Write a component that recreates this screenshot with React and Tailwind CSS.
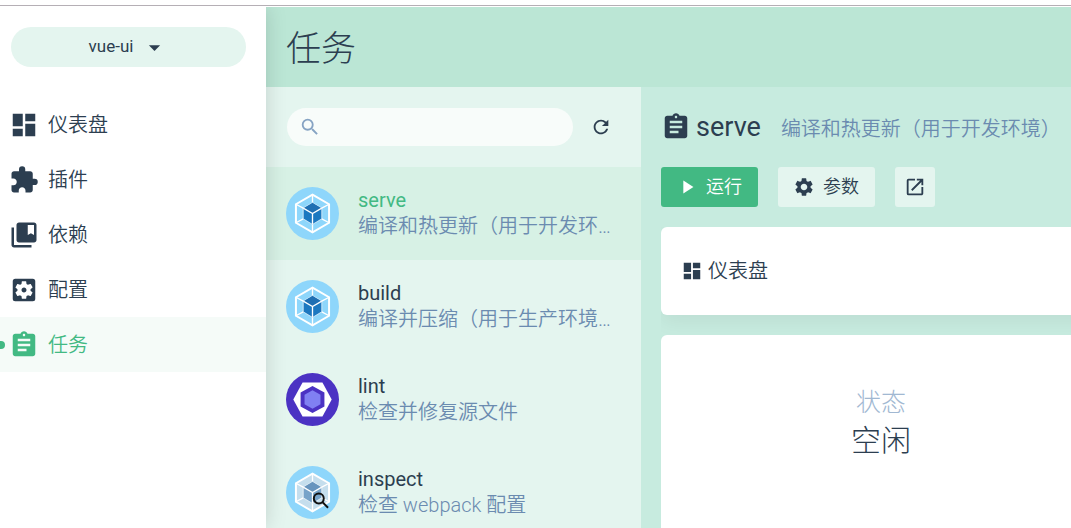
import { useState } from 'react'
import {
  MdArrowDropDown,
  MdAssignment,
  MdCollectionsBookmark,
  MdDashboard,
  MdExtension,
  MdOpenInNew,
  MdPlayArrow,
  MdRefresh,
  MdSearch,
  MdSettings,
  MdSettingsApplications,
} from 'react-icons/md'

const NAV = [
  { id: 'dashboard', label: '仪表盘', icon: MdDashboard },
  { id: 'plugins', label: '插件', icon: MdExtension },
  { id: 'dependencies', label: '依赖', icon: MdCollectionsBookmark },
  { id: 'configuration', label: '配置', icon: MdSettingsApplications },
  { id: 'tasks', label: '任务', icon: MdAssignment },
]

const WebpackIcon = ({ inspect = false }) => {
  const shell = inspect ? '#c5deed' : '#8ed6fb'
  const cube = inspect ? '#77a3c9' : '#1c78c0'
  const top = inspect ? '#6794bd' : '#1f6fb3'

  return (
    <svg viewBox="-80 -80 160 160" className="size-[53px] shrink-0" aria-hidden="true">
      <circle r="80" fill="#8ed6fb" />
      <path d="M0-57 50-28V28L0 57-50 28V-28Z" fill={shell} stroke="#fff" strokeWidth="6" />
      <path d="M0-57V-33M50-28 28-16M50 28 28 16M0 57V33M-50 28-28 16M-50-28-28-16" stroke="#fff" strokeWidth="4" />
      <path d="M0-33 28-16V16L0 33-28 16V-16Z" fill={cube} stroke="#fff" strokeWidth="2" />
      <path d="M0-32 27-16 0-1-27-16Z" fill={top} />
      <path d="M-28-16 0 0 28-16M0 0V33" fill="none" stroke="#fff" strokeWidth="4" />
      {inspect && (
        <g fill="none" stroke="#111" strokeWidth="6">
          <circle cx="19" cy="18" r="15" />
          <path d="M30 29 47 46" />
        </g>
      )}
    </svg>
  )
}

const EslintIcon = () => (
  <svg viewBox="-80 -80 160 160" className="size-[53px] shrink-0" aria-hidden="true">
    <circle r="80" fill="#4b32c3" />
    <path d="M-58 0-30-51H30L58 0 30 51H-30Z" fill="#fff" />
    <path d="M0-41 36-21V21L0 41-36 21V-21Z" fill="#4b32c3" />
    <path d="M0-28 24-14V14L0 28-24 14V-14Z" fill="#8080f2" />
  </svg>
)

const TASKS = [
  { name: 'serve', description: '编译和热更新（用于开发环境）', icon: <WebpackIcon /> },
  { name: 'build', description: '编译并压缩（用于生产环境）', icon: <WebpackIcon /> },
  { name: 'lint', description: '检查并修复源文件', icon: <EslintIcon /> },
  { name: 'inspect', description: '检查 webpack 配置', icon: <WebpackIcon inspect /> },
]

const Sidebar = () => (
  <aside className="relative z-10 w-[266px] shrink-0 bg-white pt-5 shadow-[0_0_20px_rgba(0,0,0,0.15)]">
    <button
      type="button"
      className="ml-[11px] flex h-10 w-[235px] items-center justify-center gap-2 rounded-full bg-[#e4f5ef] text-[17px]"
    >
      vue-ui
      <MdArrowDropDown className="size-[27px]" />
    </button>

    <nav className="mt-[30px]">
      {NAV.map(({ id, label, icon: Icon }) => (
        <a
          key={id}
          href={`#${id}`}
          className={`relative flex h-[55px] items-center gap-[9px] pl-[9px] text-xl font-[350] ${
            id === 'tasks' ? 'bg-[#f5fbf8] text-[#42b983]' : ''
          }`}
        >
          {id === 'tasks' && (
            <span className="absolute -left-[3px] size-2 rounded-full bg-[#42b983]" />
          )}
          <Icon className="size-[30px]" />
          {label}
        </a>
      ))}
    </nav>
  </aside>
)

const TaskList = ({ selected, onSelect }) => {
  const [search, setSearch] = useState('')
  const tasks = TASKS.filter(t => t.name.includes(search))

  return (
    <section className="w-[375px] shrink-0 overflow-hidden bg-[#e4f5ef]">
      <div className="flex h-20 items-center gap-[17px] pl-[21px]">
        <label className="flex h-[38px] w-[286px] items-center gap-2 rounded-full bg-[#f8fcfa] px-3">
          <MdSearch className="size-[22px] shrink-0 text-[#86a3c3]" />
          <input
            type="text"
            aria-label="搜索任务"
            value={search}
            onChange={e => setSearch(e.target.value)}
            className="w-full min-w-0 bg-transparent text-lg focus:outline-none"
          />
        </label>
        <button type="button" aria-label="刷新">
          <MdRefresh className="size-[22px]" />
        </button>
      </div>

      {tasks.map(task => (
        <button
          key={task.name}
          type="button"
          onClick={() => onSelect(task.name)}
          className={`flex w-full gap-[19px] p-5 pr-7 text-left text-xl leading-[26px] ${
            task.name === selected ? 'bg-[#d7f1e5]' : ''
          }`}
        >
          {task.icon}
          <span className="min-w-0">
            <span className={`block ${task.name === selected ? 'text-[#42b983]' : ''}`}>
              {task.name}
            </span>
            <span className="block truncate font-[350] text-[#6b8bb0]">{task.description}</span>
          </span>
        </button>
      ))}
    </section>
  )
}

const TaskDetails = ({ task }) => (
  <section className="min-w-0 flex-1 overflow-hidden bg-[#c7ebdf] pl-5">
    <div className="flex h-20 items-center whitespace-nowrap">
      <MdAssignment className="mr-[5px] size-[30px] shrink-0" />
      <h2 className="mr-5 text-[27px]">{task.name}</h2>
      <p className="pt-1 text-xl font-[350] text-[#6b8bb0]">{task.description}</p>
    </div>

    {/* Actions */}
    <div className="flex gap-5 text-lg font-[350]">
      <button type="button" className="flex h-10 items-center gap-2 rounded-[3px] bg-[#42b983] pl-[15px] pr-4 text-white">
        <MdPlayArrow className="size-[22px]" />
        运行
      </button>
      <button type="button" className="flex h-10 items-center gap-2 rounded-[3px] bg-[#e4f5ef] pl-[15px] pr-4">
        <MdSettings className="size-[22px]" />
        参数
      </button>
      <button
        type="button"
        aria-label="打开"
        className="flex size-10 items-center justify-center rounded-[3px] bg-[#e4f5ef]"
      >
        <MdOpenInNew className="size-[22px]" />
      </button>
    </div>

    {/* Cards run past the right edge of the window */}
    <div className="mt-5 overflow-hidden">
      <div className="-mr-[30px] flex flex-col gap-5">
        <div className="flex h-[88px] items-center gap-[5px] rounded-md bg-white px-5 text-xl font-[350] shadow-[0_6px_20px_rgba(0,0,0,0.06)]">
          <MdDashboard className="size-[22px]" />
          仪表盘
        </div>
        <div className="relative min-h-[240px] rounded-md bg-white pt-12 text-center font-light">
          <div className="text-[25px] leading-10 text-[#a1b8d2]">状态</div>
          <div className="text-3xl leading-9">空闲</div>
        </div>
      </div>
    </div>
  </section>
)

const App = () => {
  const [selected, setSelected] = useState('serve')

  return (
    <div className="flex h-screen flex-col overflow-hidden bg-white pt-[5px] font-['Roboto','Noto_Sans_CJK_SC',sans-serif] text-[#2c3e50]">
      <div className="mb-px h-px shrink-0 bg-[#b5afb5]" />
      <div className="flex min-h-0 flex-1 overflow-hidden">
        <Sidebar />
        <main className="flex min-w-0 flex-1 flex-col">
          <header className="flex h-20 shrink-0 items-center bg-[#bbe6d5] px-5 pt-1.5">
            <h1 className="text-[35px] font-light">任务</h1>
          </header>
          <div className="flex min-h-0 flex-1">
            <TaskList selected={selected} onSelect={setSelected} />
            <TaskDetails task={TASKS.find(t => t.name === selected)} />
          </div>
        </main>
      </div>
    </div>
  )
}

export default App
